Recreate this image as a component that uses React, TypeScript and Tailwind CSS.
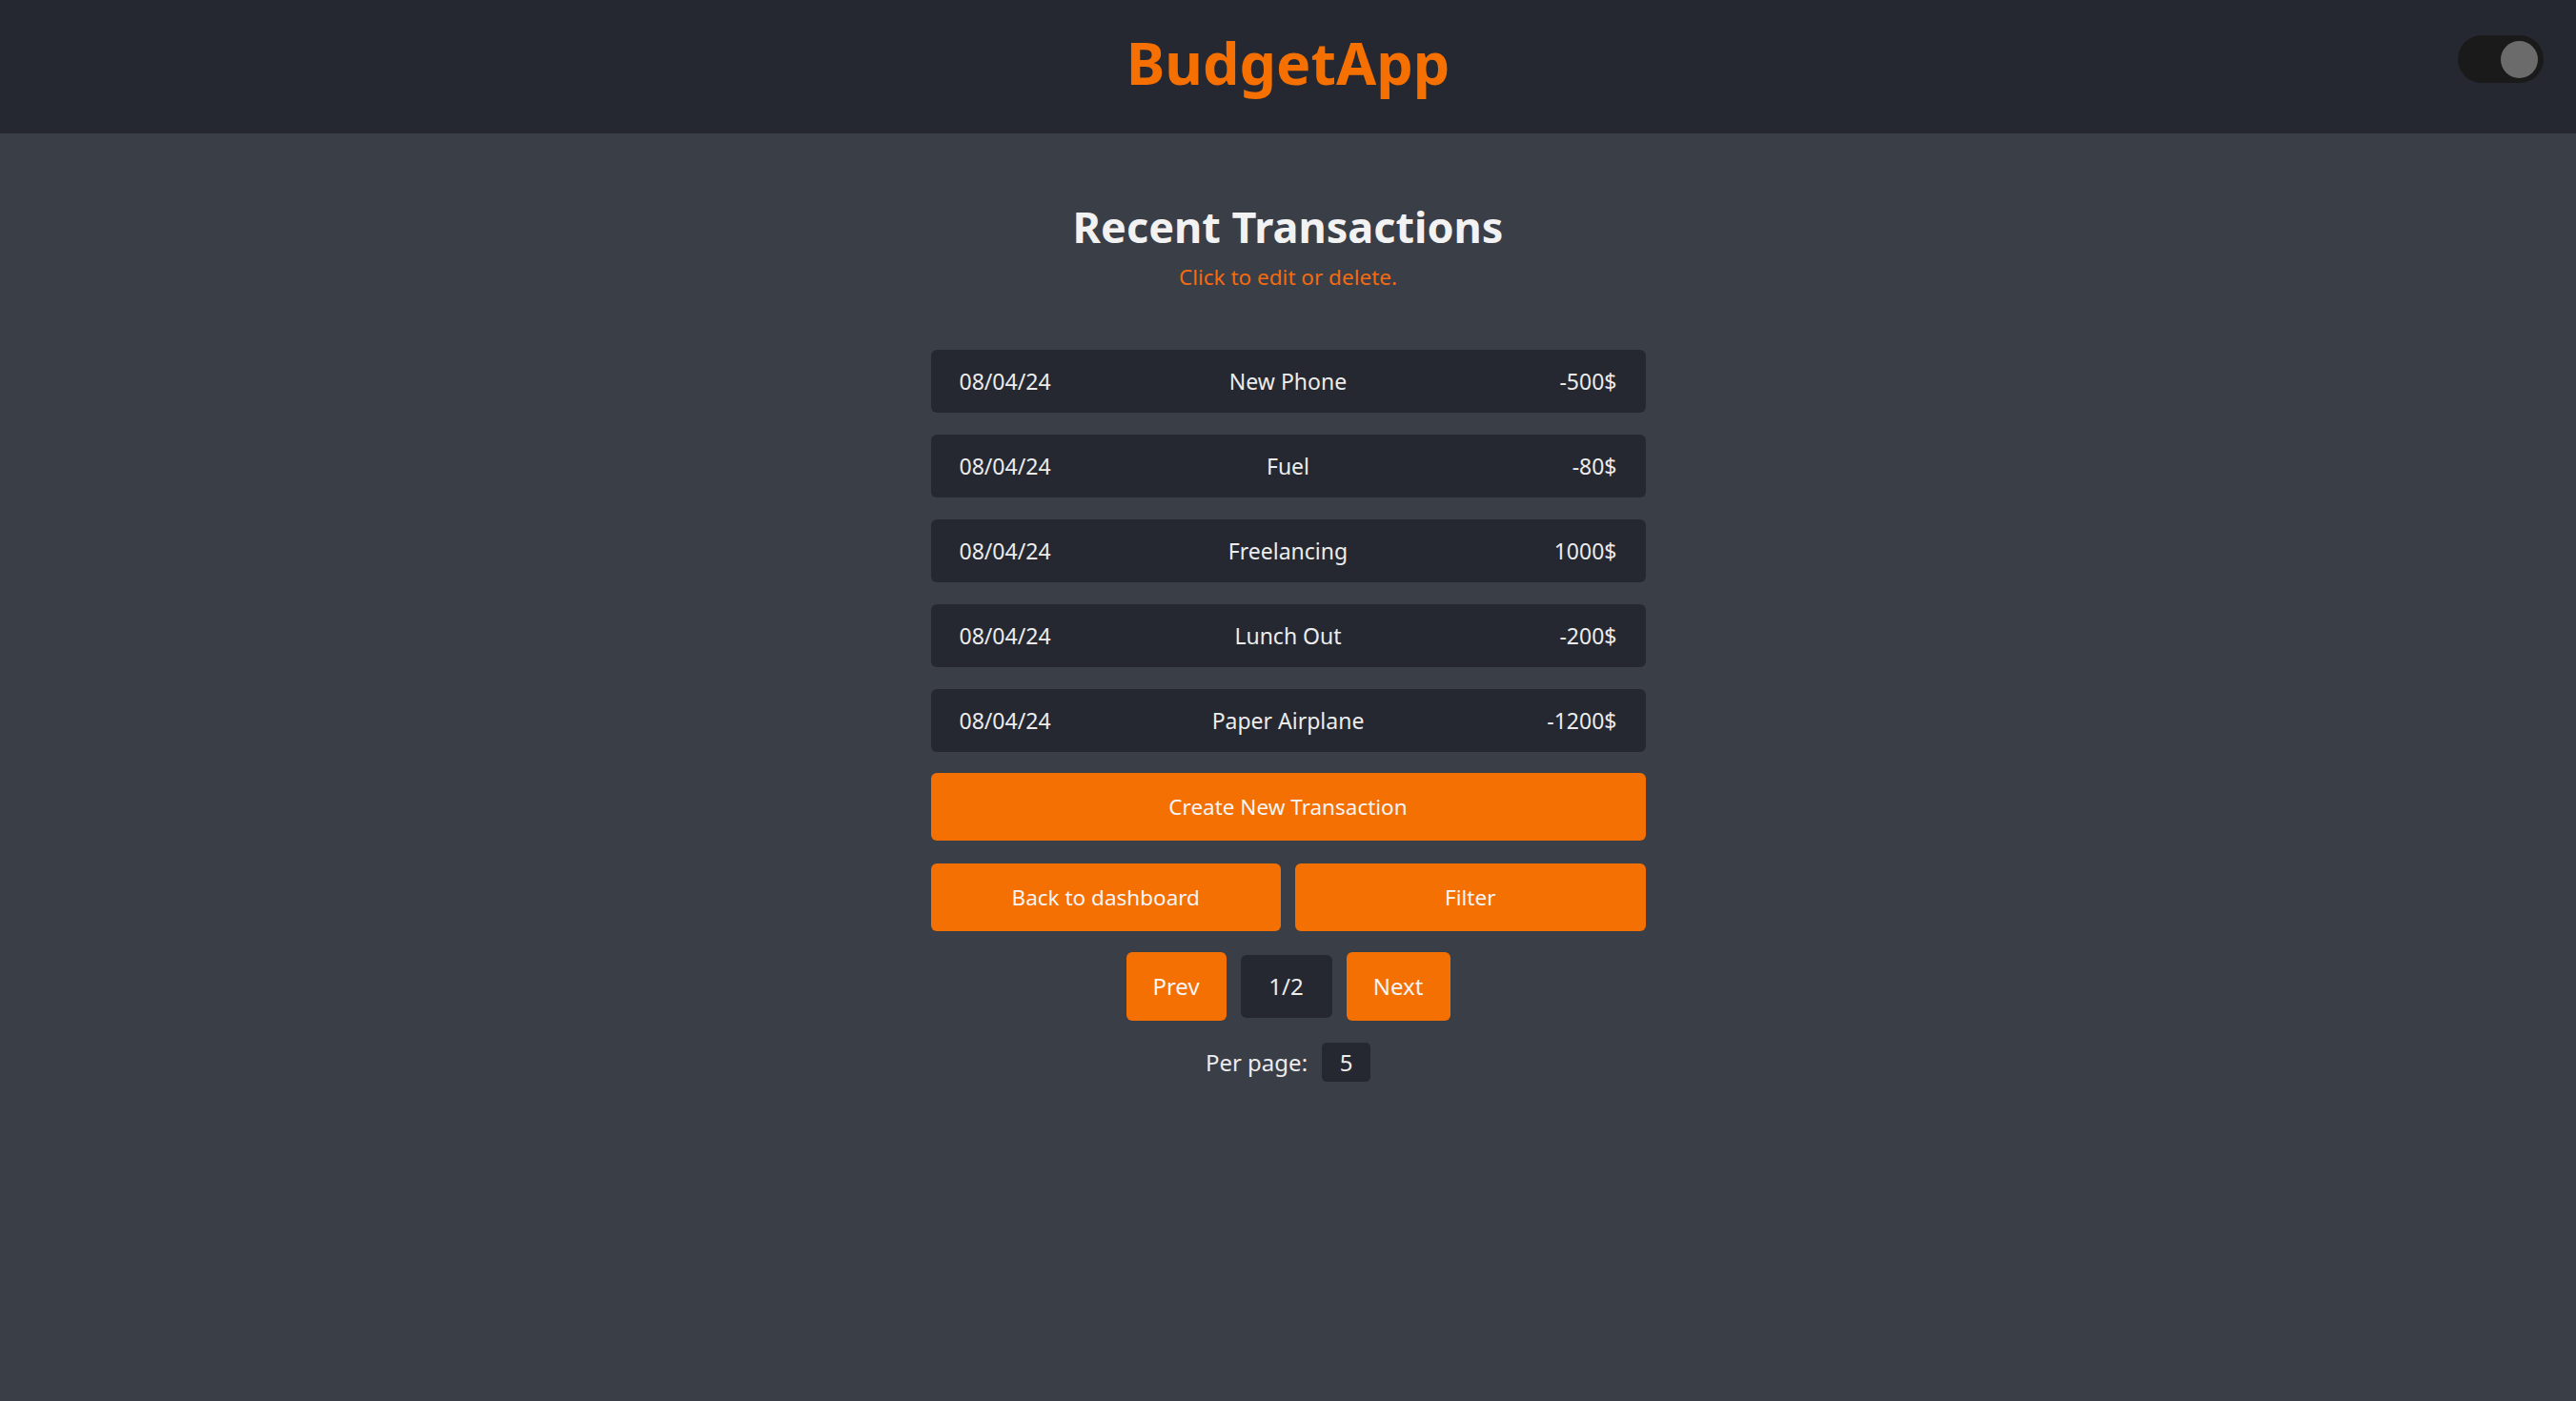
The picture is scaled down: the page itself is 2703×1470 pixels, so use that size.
import { useState } from 'react'

interface Transaction {
  date: string
  name: string
  amount: string
}

const transactions: Transaction[] = [
  { date: '08/04/24', name: 'New Phone', amount: '-500$' },
  { date: '08/04/24', name: 'Fuel', amount: '-80$' },
  { date: '08/04/24', name: 'Freelancing', amount: '1000$' },
  { date: '08/04/24', name: 'Lunch Out', amount: '-200$' },
  { date: '08/04/24', name: 'Paper Airplane', amount: '-1200$' },
]

function ThemeToggle() {
  const [on, setOn] = useState(true)
  return (
    <button
      type="button"
      onClick={() => setOn(!on)}
      className={`absolute right-[34px] top-[37px] flex h-[50px] w-[90px] items-center rounded-full bg-[#1a1a1a] px-[6px] ${on ? 'justify-end' : 'justify-start'}`}
    >
      <span className="h-[39px] w-[39px] rounded-full bg-[#6b6b6b]" />
    </button>
  )
}

export default function App() {
  const [perPage] = useState(5)

  return (
    <div className="min-h-screen bg-[#3a3e47] font-['Noto_Sans','Open_Sans',sans-serif] text-[#ececec]">
      <header className="relative flex h-[140px] items-center justify-center bg-[#252831] pb-[9px]">
        <h1 className="text-[61px] font-bold leading-none text-[#f57000]">BudgetApp</h1>
        <ThemeToggle />
      </header>

      <main className="mx-auto flex w-[750px] flex-col items-center pt-[68px]">
        <h2 className="text-[45px] font-bold leading-[60px] text-[#f2f2f2]">Recent Transactions</h2>
        <p className="mt-[8px] text-[22.5px] leading-[30px] text-[#f26b12]">Click to edit or delete.</p>

        <div className="mt-[61px] flex w-full flex-col gap-[23px]">
          {transactions.map((t, i) => (
            <div
              key={i}
              className="grid h-[66px] cursor-pointer grid-cols-3 items-center rounded-[6px] bg-[#252831] px-[30px] text-[23px]"
            >
              <span className="text-left">{t.date}</span>
              <span className="text-center">{t.name}</span>
              <span className="text-right">{t.amount}</span>
            </div>
          ))}
        </div>

        <button className="mt-[22px] h-[71px] w-full rounded-[6px] bg-[#f57002] text-[22.5px] text-[#f5f5f5]">
          Create New Transaction
        </button>

        <div className="mt-[24px] grid w-full grid-cols-2 gap-[15px]">
          <button className="h-[71px] rounded-[6px] bg-[#f57002] text-[22.5px] text-[#f5f5f5]">Back to dashboard</button>
          <button className="h-[71px] rounded-[6px] bg-[#f57002] text-[22.5px] text-[#f5f5f5]">Filter</button>
        </div>

        <div className="mt-[22px] flex items-center gap-[15px] text-[24px]">
          <button className="h-[72px] w-[105px] rounded-[6px] bg-[#f57002] text-[#f5f5f5]">Prev</button>
          <span className="flex h-[66px] w-[96px] items-center justify-center rounded-[6px] bg-[#252831]">1/2</span>
          <button className="h-[72px] w-[109px] rounded-[6px] bg-[#f57002] text-[#f5f5f5]">Next</button>
        </div>

        <div className="mt-[23px] flex items-center gap-[15px] text-[24px]">
          <span>Per page:</span>
          <span className="flex h-[41px] w-[51px] items-center justify-center rounded-[5px] bg-[#252831]">{perPage}</span>
        </div>
      </main>
    </div>
  )
}
